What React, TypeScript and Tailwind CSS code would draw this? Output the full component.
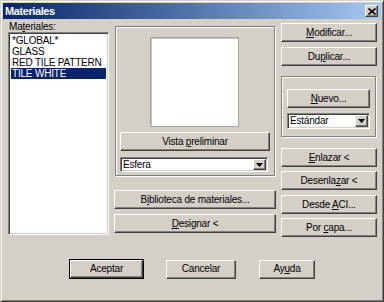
import type { ReactNode } from 'react'

const RAISED =
  'bg-[#d4d0c8] border border-t-white border-l-white border-r-[#404040] border-b-[#404040] shadow-[inset_-1px_-1px_0_#808080,inset_1px_1px_0_#d4d0c8]'
const SUNKEN =
  'bg-white border border-t-[#808080] border-l-[#808080] border-r-white border-b-white shadow-[inset_1px_1px_0_#404040,inset_-1px_-1px_0_#d4d0c8]'
const ETCHED = 'border border-[#808080] shadow-[inset_1px_1px_0_#fff,1px_1px_0_#fff]'

function Btn({ children, className = '' }: { children: ReactNode; className?: string }) {
  return (
    <div className={`flex items-center justify-center shrink-0 text-black ${RAISED} ${className}`}>
      <span className="leading-none">{children}</span>
    </div>
  )
}

// letra con subrayado (tecla de acceso)
function K({ c }: { c: string }) {
  return <span className="underline underline-offset-[1px]">{c}</span>
}

function Combo({ value, className = '' }: { value: string; className?: string }) {
  return (
    <div className={`flex items-stretch shrink-0 ${SUNKEN} ${className}`}>
      <div className="flex-1 pl-[2px] flex items-center leading-none">{value}</div>
      <div className={`w-[13px] m-[1px] flex items-center justify-center ${RAISED}`}>
        <svg width="7" height="4" viewBox="0 0 7 4">
          <path d="M0 0h7L3.5 4z" fill="#000" />
        </svg>
      </div>
    </div>
  )
}

const ITEMS = ['*GLOBAL*', 'GLASS', 'RED TILE PATTERN', 'TILE WHITE']

export default function App() {
  return (
    <div className="w-[384px] h-[302px] bg-[#d4d0c8] border border-t-[#d4d0c8] border-l-[#d4d0c8] border-r-[#404040] border-b-[#404040] shadow-[inset_1px_1px_0_#fff,inset_-1px_-1px_0_#808080] p-[2px] text-[10px] tracking-[-0.2px] font-['Liberation_Sans',Arial,sans-serif] text-black overflow-hidden">
      {/* barra de título */}
      <div className="h-[16px] flex items-center bg-gradient-to-r from-[#0a246a] to-[#a6caf0]">
        <span className="pl-[2px] text-white font-bold text-[11px] tracking-[-0.4px] leading-none">Materiales</span>
        <div className={`ml-auto mr-[3px] w-[13px] h-[12px] flex items-center justify-center ${RAISED}`}>
          <svg width="8" height="7" viewBox="0 0 8 7">
            <path d="M0.5 0.5L7.5 6.5M7.5 0.5L0.5 6.5" stroke="#000" strokeWidth="1.6" />
          </svg>
        </div>
      </div>

      {/* contenido */}
      <div className="flex items-start pl-[5px]">
        {/* lista de materiales */}
        <div className="w-[101px] shrink-0">
          <div className="mt-[2px] h-[11px] leading-[11px] pl-[1px]">
            Ma<K c="t" />eriales:
          </div>
          <div className={`h-[203px] p-[2px] ${SUNKEN}`}>
            {ITEMS.map((it, i) => (
              <div
                key={it}
                className={`h-[11px] leading-[11px] pl-[1px] whitespace-nowrap ${i === 3 ? 'bg-[#0a246a] text-white' : ''}`}
              >
                {it}
              </div>
            ))}
          </div>
        </div>

        {/* columna central */}
        <div className="ml-[5px] w-[162px] shrink-0 flex flex-col">
          <div className={`mt-[7px] ml-[1px] w-[160px] h-[150px] flex flex-col ${ETCHED}`}>
            <div className="mt-[10px] ml-[34px] w-[89px] h-[90px] bg-white border border-[#a8a59e] shadow-[inset_1px_1px_0_#c8c5be]" />
            <Btn className="mt-[5px] ml-[4px] w-[150px] h-[19px]">
              Vista <K c="p" />reliminar
            </Btn>
            <Combo value="Esfera" className="mt-[6px] ml-[4px] w-[148px] h-[15px]" />
          </div>
          <Btn className="mt-[14px] w-[162px] h-[19px]">
            B<K c="i" />blioteca de materiales...
          </Btn>
          <Btn className="mt-[5px] w-[162px] h-[19px]">
            <K c="D" />esignar &lt;
          </Btn>
        </div>

        {/* columna derecha */}
        <div className="ml-[5px] w-[96px] shrink-0 flex flex-col">
          <Btn className="mt-[4px] w-[96px] h-[19px]">
            <K c="M" />odificar...
          </Btn>
          <Btn className="mt-[5px] w-[96px] h-[19px]">
            Du<K c="p" />licar...
          </Btn>
          <div className={`mt-[10px] w-[95px] h-[61px] flex flex-col ${ETCHED}`}>
            <Btn className="mt-[12px] ml-[5px] w-[83px] h-[19px]">
              <K c="N" />uevo...
            </Btn>
            <Combo value="Estándar" className="mt-[5px] ml-[5px] w-[83px] h-[16px]" />
          </div>
          <Btn className="mt-[11px] w-[96px] h-[19px]">
            <K c="E" />nlazar &lt;
          </Btn>
          <Btn className="mt-[4px] w-[96px] h-[19px]">
            Desenla<K c="z" />ar &lt;
          </Btn>
          <Btn className="mt-[5px] w-[96px] h-[19px]">
            Desde <K c="A" />CI...
          </Btn>
          <Btn className="mt-[4px] w-[96px] h-[19px]">
            Por <K c="c" />apa...
          </Btn>
        </div>
      </div>

      {/* botones inferiores */}
      <div className="mt-[22px] ml-[66px] flex items-center">
        <div className="border border-black">
          <Btn className="w-[73px] h-[18px]">Aceptar</Btn>
        </div>
        <Btn className="ml-[22px] w-[70px] h-[19px]">Cancelar</Btn>
        <Btn className="ml-[23px] w-[56px] h-[19px]">
          Ay<K c="u" />da
        </Btn>
      </div>
    </div>
  )
}
